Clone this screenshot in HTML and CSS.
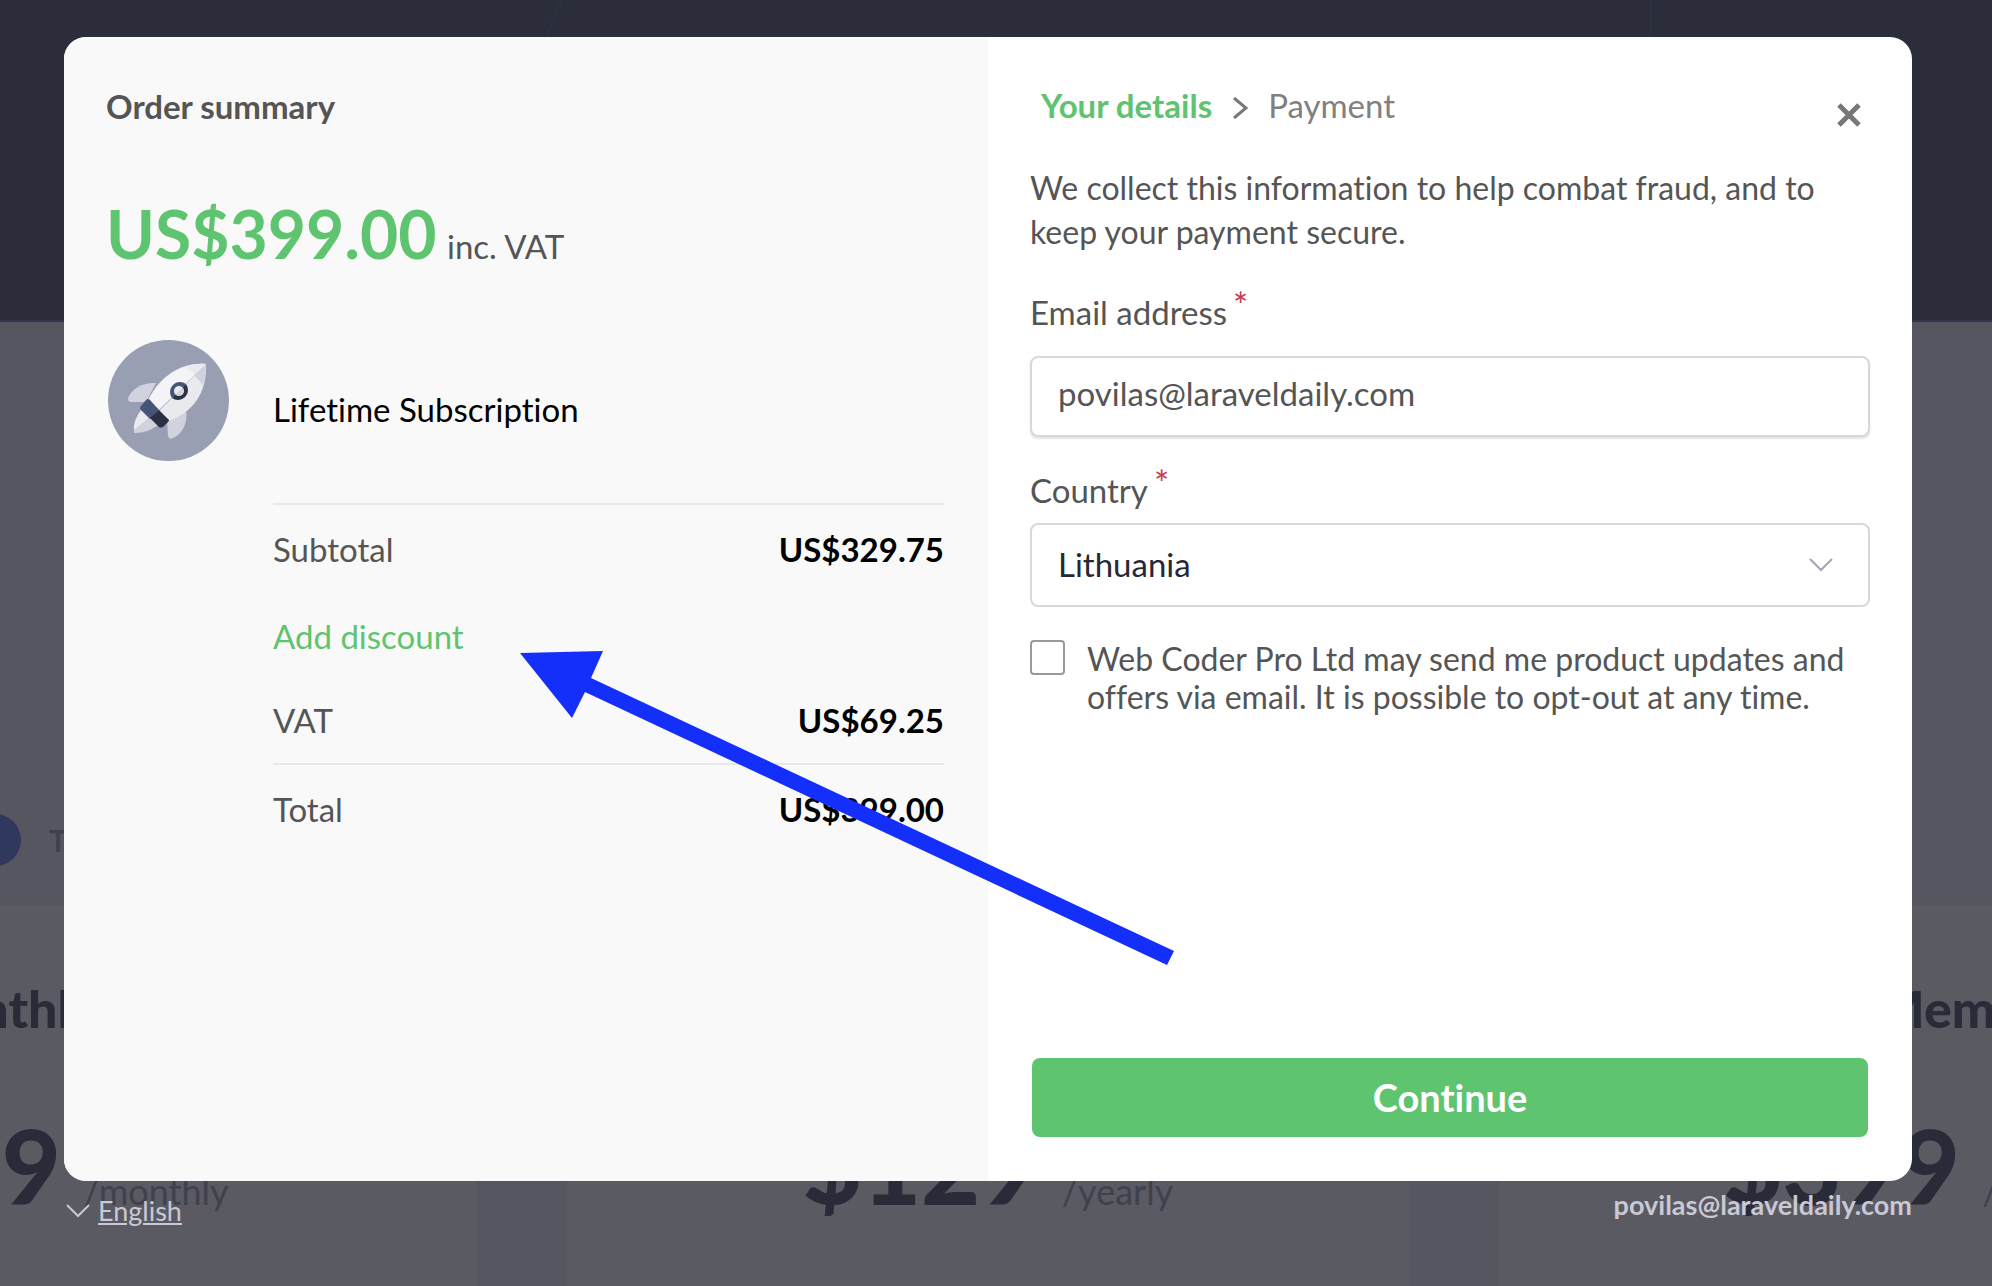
FILE: index.html
```html
<!DOCTYPE html>
<html lang="en">
<head>
  <meta charset="UTF-8">
  <title>Checkout</title>
  <meta name="viewport" content="width=device-width, initial-scale=1">
  <link rel="stylesheet" href="styles.css">
</head>
<body>
  <!-- dimmed pricing page -->
  <div class="pricing" aria-hidden="true">
    <div class="hero">
      <svg class="hero-lines" width="1976" height="60" viewBox="0 0 1976 60">
        <path d="M562 0L536 60M1651 0L1650 60" stroke="#2d2f43" stroke-width="3" fill="none"/>
      </svg>
    </div>
    <div class="billing">
      <span class="switch"></span>
      <span class="billing-label">Teams</span>
    </div>
    <div class="plans">
      <div class="plan">
        <div class="plan-name">Monthly Plan</div>
        <div class="plan-price"><b>$29</b> <span>/monthly</span></div>
      </div>
      <div class="plan">
        <div class="plan-name">Yearly Membership</div>
        <div class="plan-price"><b>$129</b> <span>/yearly</span></div>
      </div>
      <div class="plan">
        <div class="plan-name">Lifetime Membership</div>
        <div class="plan-price"><b>$399</b> <span>/lifetime</span></div>
      </div>
    </div>
  </div>

  <div class="checkout">
    <main class="modal">
      <section class="summary">
        <h2>Order summary</h2>
        <p class="price"><strong>US$399.00</strong> inc. VAT</p>

        <div class="product">
          <svg class="product-icon" width="121" height="121" viewBox="0 0 121 121">
            <circle cx="60.5" cy="60.5" r="60.5" fill="#999fb2"/>
            <path d="M48 43C36 42 24 48 20 58Q20 62 23 62L38 62Z" fill="#d0d3dd"/>
            <path d="M59 81L60 96Q61 100 65 98C75 94 80 82 78 70Z" fill="#d0d3dd"/>
            <path d="M34 69C28 76 25 85 26 90L48 76Z" fill="#eaebef"/>
            <path d="M26 90C26 93 26 93 28 93C35 93 44 90 50 85L44 75Z" fill="#d0d3dd"/>
            <path d="M98 24C76 22 54 33 40 60L51 70Z" fill="#f4f4f8"/>
            <path d="M98 24C99 47 90 70 61 81L51 71Z" fill="#e9eaee"/>
            <path d="M78 28C85 25 94 23 97 24L87 34Z" fill="#e9eaee"/>
            <path d="M98 24C98 32 97 39 95 45L86 35Z" fill="#d0d3dd"/>
            <path d="M38 60Q40 58 42 60L51 70L42 79L33 70Q31 68 33 66Z" fill="#46547a"/>
            <path d="M51 70L60 79Q62 80 60 82L55 87Q53 88 51 87L42 78Z" fill="#2b3145"/>
            <path d="M64 58A10 10 0 0 1 78 44L71 51Z" fill="#46547a"/>
            <path d="M78 44A10 10 0 0 1 64 58L71 51Z" fill="#2b3145"/>
            <circle cx="71" cy="51" r="5" fill="#e9eaee"/>
            <path d="M74.500 47.500A5 5 0 0 1 67.500 54.500Z" fill="#d0d3dd"/>
          </svg>
          <span>Lifetime Subscription</span>
        </div>

        <table class="totals">
          <tr class="ruled"><th scope="row">Subtotal</th><td>US$329.75</td></tr>
          <tr><th scope="row"><a href="#">Add discount</a></th><td></td></tr>
          <tr class="vat"><th scope="row">VAT</th><td>US$69.25</td></tr>
          <tr class="ruled"><th scope="row">Total</th><td>US$399.00</td></tr>
        </table>
      </section>

      <form class="details">
        <div class="details-head">
          <div class="steps">
            <strong>Your details</strong>
            <svg width="16" height="22" viewBox="0 0 16 22"><path d="M2 1L14 11L2 21" fill="none" stroke="#777" stroke-width="3"/></svg>
            <span>Payment</span>
          </div>
          <button type="button" class="close" aria-label="Close">
            <svg width="24" height="24" viewBox="0 0 24 24"><path d="M2 2L22 22M22 2L2 22" stroke="#777" stroke-width="5"/></svg>
          </button>
        </div>

        <p class="intro">We collect this information to help combat fraud, and to keep your payment secure.</p>

        <label for="email">Email address<sup>*</sup></label>
        <input id="email" class="field" type="email" value="povilas@laraveldaily.com">

        <label for="country">Country<sup>*</sup></label>
        <div class="select-wrap">
          <select id="country" class="field">
            <option>Lithuania</option>
          </select>
          <svg class="select-arrow" width="24" height="14" viewBox="0 0 24 14"><path d="M1 1L12 12L23 1" fill="none" stroke="#a3a3b5" stroke-width="2"/></svg>
        </div>

        <div class="consent">
          <input id="updates" type="checkbox">
          <label for="updates">Web Coder Pro Ltd may send me product updates and offers via email. It is possible to opt-out at any time.</label>
        </div>

        <button type="submit" class="continue">Continue</button>
      </form>
    </main>

    <footer class="footer">
      <a href="#" class="language">
        <svg width="24" height="14" viewBox="0 0 24 14"><path d="M1 1L12 12L23 1" fill="none" stroke="#c9c8d4" stroke-width="2"/></svg>
        <span>English</span>
      </a>
      <span class="account">povilas@laraveldaily.com</span>
    </footer>
  </div>

  <!-- arrow pointing at the discount link -->
  <svg class="arrow" width="654" height="314" viewBox="0 0 654 314">
    <path d="M0 2L83 0L71 27L654 300L647 314L65 41L52 67Z" fill="#142ffa"/>
  </svg>
</body>
</html>
```

FILE: styles.css
```css
* {
  box-sizing: border-box;
}
body {
  position: relative;
  margin: 0;
  min-height: 100vh;
  padding-right: 16px;
  font-family: Lato, sans-serif;
  font-size: 33px;
  font-variant-ligatures: none;
  line-height: 44px;
  color: #555;
  background: #565660;
}
h2, p {
  margin: 0;
}

/* page behind the modal */
.pricing {
  position: absolute;
  inset: 0;
  padding-right: 16px;
  overflow: hidden;
  color: #292b38;
}
.hero {
  height: 322px;
  margin-right: -16px;
  background: #2c2d3b;
  border-bottom: 2px solid #32364d;
}
.hero-lines {
  display: block;
}
.billing {
  display: flex;
  align-items: center;
  gap: 28px;
  height: 50px;
  margin: 493px 0 38px -75px;
}
.switch {
  width: 96px;
  height: 52px;
  border-radius: 26px;
  background: #30385d;
}
.billing-label {
  font-size: 30px;
  font-weight: bold;
  color: #40404e;
}
.plans {
  display: grid;
  grid-template-columns: repeat(3, 846px);
  gap: 86px;
  justify-content: center;
}
.plan {
  height: 460px;
  padding-top: 73px;
  text-align: center;
  white-space: nowrap;
  background: #5a5a63;
  border: 2px solid #565660;
}
.plan-name {
  font-size: 52px;
  font-weight: 900;
  line-height: 60px;
}
.plan-price {
  margin-top: 68px;
  line-height: 120px;
}
.plan-price b {
  font-size: 102px;
  font-weight: 900;
}
.plan-price span {
  margin-left: 14px;
  font-size: 36px;
  color: #40404e;
}

/* modal */
.checkout {
  position: relative;
  padding: 37px 64px 0;
}
.modal {
  display: grid;
  grid-template-columns: 1fr 1fr;
  min-height: calc(100vh - 142px);
  border-radius: 22px;
  overflow: hidden;
  background: #fff;
}
.summary {
  padding: 47px 44px 48px 42px;
  background: #f9f9f9;
}
.summary h2 {
  font-size: 33px;
}
.price {
  margin-top: 66px;
  line-height: 80px;
}
.price strong {
  margin-right: 2px;
  font-size: 66px;
  color: #5ec470;
}
.product {
  display: flex;
  align-items: center;
  gap: 44px;
  margin-top: 54px;
  color: #000;
}
.product-icon {
  margin-left: 2px;
}
.product span {
  padding-top: 16px;
}
.totals {
  width: calc(100% - 167px);
  margin: 42px 0 0 167px;
  border-collapse: collapse;
}
.totals tr {
  height: 88px;
}
.totals .vat {
  height: 84px;
}
.totals th, .totals td {
  padding: 0;
}
.totals .vat th, .totals .vat td {
  padding-bottom: 4px;
}
.totals th {
  text-align: left;
  font-weight: normal;
}
.totals td {
  text-align: right;
  font-weight: bold;
  color: #000;
}
.totals a {
  color: #5ec470;
  text-decoration: none;
}
.ruled {
  border-top: 2px solid #e8e8e8;
}

/* details form */
.details {
  display: flex;
  flex-direction: column;
  padding: 46px 42px 44px;
}
.details-head {
  display: flex;
  justify-content: space-between;
}
.steps {
  display: flex;
  align-items: center;
  gap: 20px;
  padding-left: 11px;
  color: #808080;
}
.steps strong {
  color: #5ec470;
}
.steps svg {
  margin-top: 6px;
}
.close {
  display: flex;
  padding: 20px 9px 0;
  border: none;
  background: none;
  cursor: pointer;
}
.intro {
  margin: 39px 0 36px;
  font-size: 32px;
}
sup {
  margin-left: 6px;
  font-size: 36px;
  line-height: 0;
  vertical-align: 6px;
  color: #c83c4e;
}
.field {
  display: block;
  width: 100%;
  height: 84px;
  padding: 0 26px;
  border: 2px solid #d8d8d8;
  border-radius: 8px;
  background: #fff;
  font: inherit;
  color: #555;
}
input.field {
  height: 81px;
  margin: 22px 0 31px;
  padding-bottom: 8px;
  box-shadow: 0 2px 2px #e4e4e4;
}
.select-wrap {
  position: relative;
  margin-top: 11px;
}
select.field {
  appearance: none;
  padding-bottom: 2px;
  color: #272735;
}
.select-arrow {
  position: absolute;
  top: 35px;
  right: 37px;
  pointer-events: none;
}
.consent {
  display: flex;
  align-items: flex-start;
  gap: 22px;
  margin-top: 33px;
  font-size: 32px;
  line-height: 38px;
}
.consent input {
  appearance: none;
  flex: none;
  width: 35px;
  height: 35px;
  margin: 0;
  border: 2px solid #999;
  border-radius: 4px;
}
.continue {
  height: 79px;
  margin: auto 2px 0;
  padding: 0 0 2px;
  border: none;
  border-radius: 8px;
  background: #5ec470;
  color: #fff;
  font: bold 38px Lato, sans-serif;
  font-variant-ligatures: none;
  cursor: pointer;
}

/* below the modal */
.footer {
  display: flex;
  justify-content: space-between;
  padding-top: 8px;
  font-size: 27px;
  line-height: 32px;
  color: #c9c8d4;
}
.language {
  display: flex;
  align-items: center;
  gap: 8px;
  padding: 6px 0 0 2px;
  color: inherit;
}
.account {
  font-weight: bold;
}

.arrow {
  position: absolute;
  top: 651px;
  left: 520px;
  pointer-events: none;
}
```
